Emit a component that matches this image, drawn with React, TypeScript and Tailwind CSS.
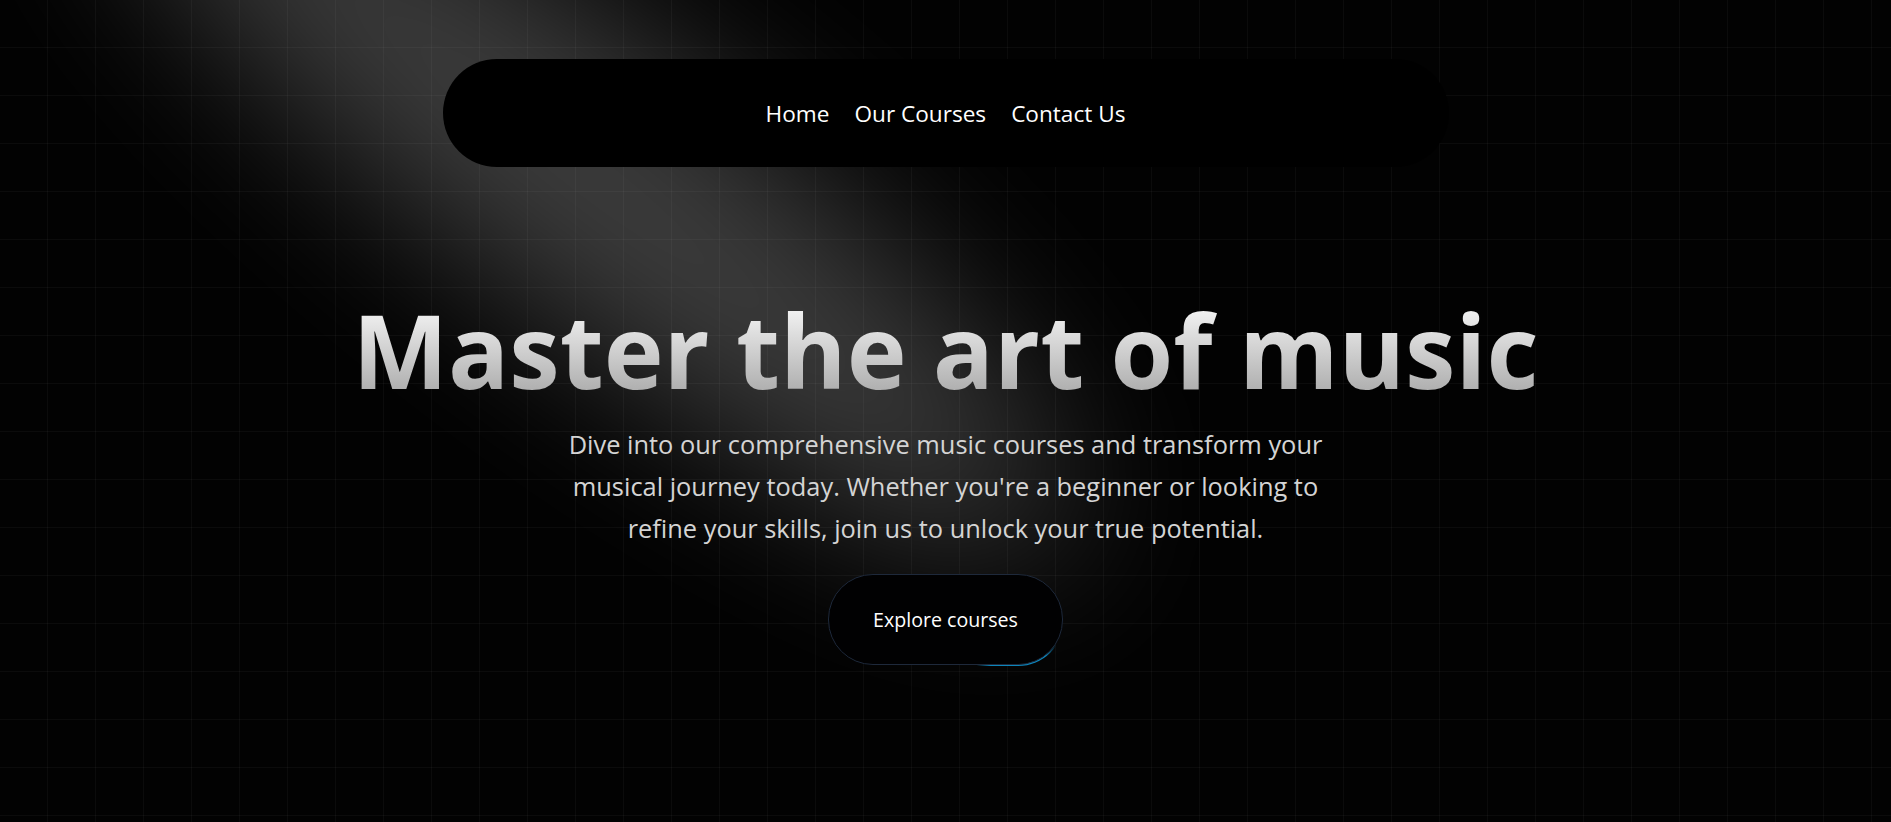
import React from "react";

const links = ["Home", "Our Courses", "Contact Us"];

function Spotlight() {
  return (
    <svg
      className="pointer-events-none absolute inset-0 z-[1] h-full w-full"
      viewBox="0 0 1891 822"
      preserveAspectRatio="none"
      fill="none"
    >
      <defs>
        <filter
          id="spot-blur"
          x="-1200"
          y="-1200"
          width="4400"
          height="3400"
          filterUnits="userSpaceOnUse"
          colorInterpolationFilters="sRGB"
        >
          <feGaussianBlur stdDeviation="85" />
        </filter>
      </defs>
      <g filter="url(#spot-blur)">
        <ellipse
          cx="590"
          cy="176"
          rx="600"
          ry="135"
          transform="rotate(37.6 590 176)"
          fill="white"
          fillOpacity="0.24"
        />
      </g>
    </svg>
  );
}

function Navbar() {
  return (
    <nav className="relative z-10 mx-auto mt-[59px] flex h-[108px] w-[1006px] items-center justify-center gap-[25px] rounded-full bg-black">
      {links.map((link) => (
        <a key={link} href="#" className="pt-[2px] text-[22.6px] text-white">
          {link}
        </a>
      ))}
    </nav>
  );
}

function MovingBorderButton({ children }: { children: React.ReactNode }) {
  return (
    <div className="relative h-[93px] w-[237px] overflow-hidden rounded-[46px] p-px">
      {/* glow riding the border */}
      <div className="absolute left-[142px] top-[42px] h-[100px] w-[100px] bg-[radial-gradient(#0ea5e9_40%,transparent_60%)] opacity-80" />
      <div className="relative flex h-full w-full items-center justify-center rounded-[45px] border border-[#1e293b] bg-[#010102] text-[19.6px] text-white">
        {children}
      </div>
    </div>
  );
}

export default function App() {
  return (
    <main
      className="relative h-[822px] w-full overflow-hidden bg-[#020202] bg-[linear-gradient(to_right,rgba(255,255,255,0.035)_1px,transparent_1px),linear-gradient(to_bottom,rgba(255,255,255,0.035)_1px,transparent_1px)] bg-[size:48px_48px] bg-[position:-1px_-1px] antialiased"
      style={{ fontFamily: '"Open Sans", "Noto Sans", sans-serif' }}
    >
      <Spotlight />
      <Navbar />

      {/* Hero */}
      <section className="relative z-10 mt-[133px] flex flex-col items-center">
        <h1 className="bg-gradient-to-b from-neutral-50 to-neutral-400 bg-clip-text pb-2 text-[101.4px] font-bold leading-none text-transparent">
          Master the art of music
        </h1>
        <p className="mt-[14px] max-w-[790px] text-center text-[25.4px] leading-[42px] text-neutral-300">
          Dive into our comprehensive music courses and transform your musical
          journey today. Whether you're a beginner or looking to refine your
          skills, join us to unlock your true potential.
        </p>
        <div className="mt-[24px]">
          <MovingBorderButton>Explore courses</MovingBorderButton>
        </div>
      </section>
    </main>
  );
}
